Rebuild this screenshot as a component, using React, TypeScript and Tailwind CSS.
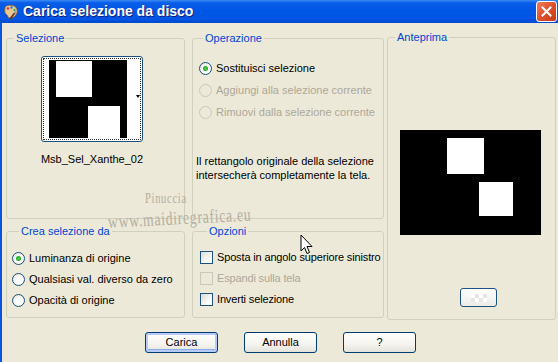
import React from "react";

const font = "font-['Liberation_Sans',Arial,sans-serif]";

function Radio({ label, checked = false, disabled = false, tall = false }: { label: string; checked?: boolean; disabled?: boolean; tall?: boolean }) {
  return (
    <div className={`flex items-center whitespace-nowrap ${tall ? "h-[22px]" : "h-[21px]"}`}>
      <span
        className={`w-[13px] h-[13px] shrink-0 rounded-full border flex items-center justify-center ${
          disabled
            ? "border-[#CAC8BB] bg-[#ECE9D8]"
            : "border-[#1C5180] bg-[radial-gradient(circle_at_60%_60%,#ffffff_30%,#DCDBD3_100%)]"
        }`}
      >
        {checked && <span className="w-[5px] h-[5px] rounded-full bg-[radial-gradient(circle,#55D84F_0%,#21A121_70%)]" />}
      </span>
      <span className={`ml-[4px] ${disabled ? "text-[#ACA899]" : "text-black"}`}>{label}</span>
    </div>
  );
}

function Check({ label, disabled = false }: { label: string; disabled?: boolean }) {
  return (
    <div className="flex items-center h-[21px] whitespace-nowrap">
      <span
        className={`w-[13px] h-[13px] shrink-0 border ${
          disabled ? "border-[#CAC8BB] bg-[#ECE9D8]" : "border-[#1C5180] bg-[linear-gradient(135deg,#DCDBD3_0%,#ffffff_80%)]"
        }`}
      />
      <span className={`ml-[4px] ${disabled ? "text-[#ACA899]" : "text-black"}`}>{label}</span>
    </div>
  );
}

function Box({ title, className, children }: { title: string; className: string; children?: React.ReactNode }) {
  return (
    <fieldset className={`border border-[#D0D0BF] rounded-[3px] ${className}`}>
      <legend className="ml-[7px] px-[2px] text-[#0046D5] leading-[13px] whitespace-nowrap">{title}</legend>
      {children}
    </fieldset>
  );
}

function XpButton({ label, primary = false }: { label: string; primary?: boolean }) {
  return (
    <div
      className={`w-[73px] h-[21px] rounded-[3px] border border-[#003C74] bg-[linear-gradient(180deg,#FFFFFF_0%,#F4F3EE_60%,#E3E2DA_100%)] flex items-center justify-center text-black ${
        primary ? "shadow-[inset_0_0_0_2px_#B6CCF7,inset_0_-1px_0_2px_#89ADE4]" : ""
      }`}
    >
      {label}
    </div>
  );
}

function TitleIcon() {
  return (
    <svg width="16" height="16" viewBox="0 0 16 16">
      <path d="M2 4 C2 1.5 6 1 9 1.5 C13 2 15 5 14 9 C13 12 10 14 7 14 C5 14 5 12 4 11 C3 10 1 9 2 4 Z" fill="#E8C79A" stroke="#8A5A2E" strokeWidth="0.8" />
      <circle cx="5" cy="4.5" r="1.3" fill="#E53A2A" />
      <circle cx="8.5" cy="3.5" r="1.2" fill="#2E7BE0" />
      <circle cx="11.5" cy="6" r="1.2" fill="#3BB34A" />
      <circle cx="4.5" cy="8" r="1.1" fill="#F2D23A" />
      <path d="M7 15 L12 8.5" stroke="#5A3A1E" strokeWidth="1.6" />
      <path d="M11.5 9 L13.5 6.5" stroke="#9AA4B0" strokeWidth="1.8" />
    </svg>
  );
}

function Thumb() {
  return (
    <div className="w-[102px] h-[86px] rounded-[3px] border border-[#1C5180] bg-white p-[1px]">
      <div className="w-full h-full border border-dotted border-[#333] flex items-center pl-[5px]">
        <div className="relative w-[78px] h-[78px] bg-black">
          <div className="absolute left-[7px] top-[1px] w-[36px] h-[36px] bg-white" />
          <div className="absolute left-[39px] top-[46px] w-[32px] h-[32px] bg-white" />
        </div>
        <div className="ml-[9px] mt-[-6px] w-0 h-0 border-l-[2.5px] border-r-[2.5px] border-t-[3px] border-l-transparent border-r-transparent border-t-black" />
      </div>
    </div>
  );
}

export default function App() {
  return (
    <div className={`relative w-[558px] h-[362px] overflow-hidden bg-[#ECE9D8] text-[11px] ${font} flex flex-col`}>
      {/* title bar */}
      <div className="h-[23px] shrink-0 flex items-center bg-[linear-gradient(180deg,#3C8CF3_0%,#0A5EE8_12%,#0056E4_45%,#0055E6_80%,#0049CC_100%)]">
        <div className="ml-[3px] mt-[1px]">
          <TitleIcon />
        </div>
        <span className="ml-[4px] text-white font-bold text-[14px] [text-shadow:1px_1px_0_#0A1E78]">Carica selezione da disco</span>
        <div className="ml-auto mr-[1px] mb-[1px] w-[21px] h-[21px] rounded-[3px] border border-white bg-[linear-gradient(135deg,#EE8060_0%,#E0532F_45%,#C6391A_100%)] flex items-center justify-center">
          <svg width="11" height="11" viewBox="0 0 11 11">
            <path d="M1.5 1.5 L9.5 9.5 M9.5 1.5 L1.5 9.5" stroke="white" strokeWidth="2" strokeLinecap="square" />
          </svg>
        </div>
      </div>

      {/* body */}
      <div className="flex-1 border-l-2 border-[#0A52E0] pl-[4px] flex flex-col">
        <div className="flex">
          <div className="w-[179px] flex flex-col">
            <Box title="Selezione" className="mt-[9px] h-[187px]">
              <div className="ml-[34px] mt-[11px] w-[102px] flex flex-col items-center">
                <Thumb />
                <div className="mt-[9px] text-black whitespace-nowrap">Msb_Sel_Xanthe_02</div>
              </div>
            </Box>
            <Box title="Crea selezione da" className="mt-[6px] h-[93px] pl-[5px]">
              <div className="mt-[10px]">
                <Radio label="Luminanza di origine" checked />
                <Radio label="Qualsiasi val. diverso da zero" />
                <Radio label="Opacità di origine" />
              </div>
            </Box>
          </div>

          <div className="ml-[7px] w-[192px] flex flex-col">
            <Box title="Operazione" className="mt-[9px] h-[187px] pl-[3px]">
              <div className="mt-[12px] ml-[3px]">
                <Radio label="Sostituisci selezione" checked tall />
                <Radio label="Aggiungi alla selezione corrente" disabled tall />
                <Radio label="Rimuovi dalla selezione corrente" disabled tall />
              </div>
              <p className="mt-[31px] leading-[14px] text-black whitespace-nowrap">
                Il rettangolo originale della selezione
                <br />
                intersecherà completamente la tela.
              </p>
            </Box>
            <Box title="Opzioni" className="mt-[6px] h-[93px] pl-[7px]">
              <div className="mt-[9px] tracking-[-0.15px]">
                <Check label="Sposta in angolo superiore sinistro" />
                <Check label="Espandi sulla tela" disabled />
                <Check label="Inverti selezione" />
              </div>
            </Box>
          </div>

          <div className="ml-[3px] w-[169px] flex flex-col">
            <Box title="Anteprima" className="mt-[8px] h-[289px] flex flex-col">
              <div className="mt-[86px] ml-[12px] relative w-[141px] h-[105px] bg-black">
                <div className="absolute left-[47px] top-[8px] w-[37px] h-[36px] bg-white" />
                <div className="absolute left-[79px] top-[52px] w-[34px] h-[34px] bg-white" />
              </div>
              <div className="mt-[53px] ml-[72px] w-[37px] h-[19px] rounded-[3px] border border-[#1C5180] bg-[linear-gradient(180deg,#FFFFFF_0%,#ECEBE6_100%)] flex items-center justify-center">
                <div className="w-[16px] h-[8px] bg-[repeating-conic-gradient(#E6E6E6_0%_25%,#FFFFFF_0%_50%)] bg-[length:8px_8px]" />
              </div>
            </Box>
          </div>
        </div>

        <div className="mt-[12px] ml-[139px] flex gap-[26px]">
          <XpButton label="Carica" primary />
          <XpButton label="Annulla" />
          <XpButton label="?" />
        </div>
      </div>

      {/* watermark */}
      <div className="absolute left-[145px] top-[190px] text-[15px] leading-[17px] text-[#B3AFA2] font-['Liberation_Serif',serif] scale-x-[0.7] origin-left tracking-[1px]">
        Pinuccia
      </div>
      <div className="absolute left-[108px] top-[212px] text-[19px] leading-[19px] text-[#B3AFA2] font-['Liberation_Serif',serif] scale-x-[0.72] origin-left -rotate-[3deg] tracking-[1px]">
        www.maidiregrafica.eu
      </div>

      {/* mouse cursor */}
      <svg className="absolute left-[300px] top-[234px]" width="13" height="21" viewBox="0 0 13 21">
        <path d="M1 1 L1 17 L4.5 13.5 L7 19.5 L9.5 18.5 L7 12.5 L12 12.5 Z" fill="white" stroke="black" strokeWidth="1" strokeLinejoin="miter" />
      </svg>
    </div>
  );
}
